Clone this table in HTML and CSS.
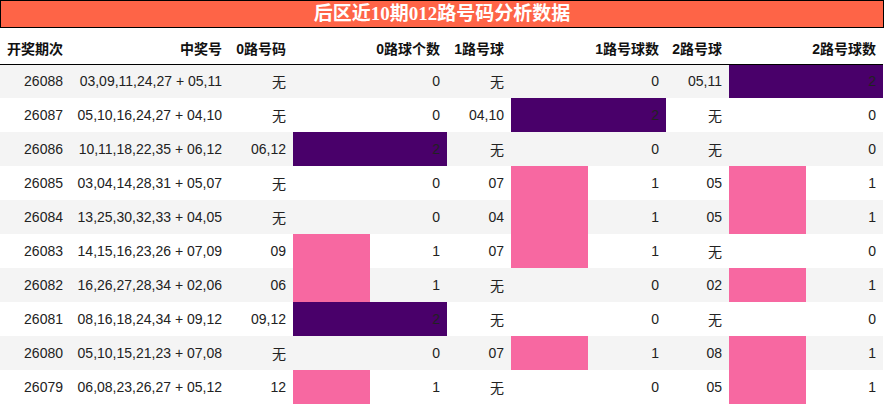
FILE: index.html
```html
<!DOCTYPE html>
<html lang="zh">
<head>
<meta charset="utf-8">
<link rel="stylesheet" href="styles.css">
</head>
<body>
<div class="title">后区近10期012路号码分析数据</div>
<table class="grid">
<colgroup>
<col class="c1"><col class="c2"><col class="c3"><col class="c4"><col class="c5"><col class="c6"><col class="c7"><col class="c8">
</colgroup>
<thead>
<tr><th>开奖期次</th><th>中奖号</th><th>0路号码</th><th>0路球个数</th><th>1路号球</th><th>1路号球数</th><th>2路号球</th><th>2路号球数</th></tr>
</thead>
<tbody>
<tr><td>26088</td><td>03,09,11,24,27 + 05,11</td><td>无</td><td>0</td><td>无</td><td>0</td><td>05,11</td><td class="b2">2</td></tr>
<tr><td>26087</td><td>05,10,16,24,27 + 04,10</td><td>无</td><td>0</td><td>04,10</td><td class="b2">2</td><td>无</td><td>0</td></tr>
<tr><td>26086</td><td>10,11,18,22,35 + 06,12</td><td>06,12</td><td class="b2">2</td><td>无</td><td>0</td><td>无</td><td>0</td></tr>
<tr><td>26085</td><td>03,04,14,28,31 + 05,07</td><td>无</td><td>0</td><td>07</td><td class="b1">1</td><td>05</td><td class="b1">1</td></tr>
<tr><td>26084</td><td>13,25,30,32,33 + 04,05</td><td>无</td><td>0</td><td>04</td><td class="b1">1</td><td>05</td><td class="b1">1</td></tr>
<tr><td>26083</td><td>14,15,16,23,26 + 07,09</td><td>09</td><td class="b1">1</td><td>07</td><td class="b1">1</td><td>无</td><td>0</td></tr>
<tr><td>26082</td><td>16,26,27,28,34 + 02,06</td><td>06</td><td class="b1">1</td><td>无</td><td>0</td><td>02</td><td class="b1">1</td></tr>
<tr><td>26081</td><td>08,16,18,24,34 + 09,12</td><td>09,12</td><td class="b2">2</td><td>无</td><td>0</td><td>无</td><td>0</td></tr>
<tr><td>26080</td><td>05,10,15,21,23 + 07,08</td><td>无</td><td>0</td><td>07</td><td class="b1">1</td><td>08</td><td class="b1">1</td></tr>
<tr><td>26079</td><td>06,08,23,26,27 + 05,12</td><td>12</td><td class="b1">1</td><td>无</td><td>0</td><td>05</td><td class="b1">1</td></tr>
</tbody>
</table>
</body>
</html>
```
FILE: styles.css
```css
html, body {
  margin: 0;
  padding: 0;
  background: #ffffff;
}
body {
  width: 884px;
  font-family: "Liberation Sans", "Noto Sans CJK SC", sans-serif;
  color: #222222;
}
.title {
  box-sizing: border-box;
  height: 28px;
  border: 1px solid #000000;
  background: #fe6447;
  color: #ffffff;
  font-family: "Liberation Serif", "Noto Sans CJK SC", serif;
  font-weight: bold;
  font-size: 19px;
  line-height: 26px;
  text-align: center;
}
.grid {
  width: 883px;
  table-layout: fixed;
  border-collapse: collapse;
  border-spacing: 0;
  font-size: 14px;
}
.c1 { width: 70px; }
.c2 { width: 159px; }
.c3 { width: 64px; }
.c4 { width: 154px; }
.c5 { width: 64px; }
.c6 { width: 155px; }
.c7 { width: 63px; }
.c8 { width: 154px; }
.grid th {
  box-sizing: border-box;
  height: 36px;
  padding: 0 7px 6px 0;
  vertical-align: bottom;
  text-align: right;
  font-weight: bold;
  color: #111111;
  border-bottom: 1px solid #000000;
  white-space: nowrap;
}
.grid tbody tr:first-child td {
  border-top: 1px solid #ffffff;
}
.grid td {
  box-sizing: border-box;
  height: 34px;
  padding: 0 7px 0 0;
  text-align: right;
  vertical-align: middle;
  white-space: nowrap;
}
.grid tbody tr:nth-child(odd) td {
  background-color: #f4f4f4;
}
.grid tbody tr td.b2 {
  background: #49006a;
}
.grid tbody tr td.b1 {
  background: linear-gradient(90deg, #f768a1 50%, transparent 50%);
}
.grid tbody tr:nth-child(odd) td.b1 {
  background: linear-gradient(90deg, #f768a1 50%, #f4f4f4 50%);
}
```
